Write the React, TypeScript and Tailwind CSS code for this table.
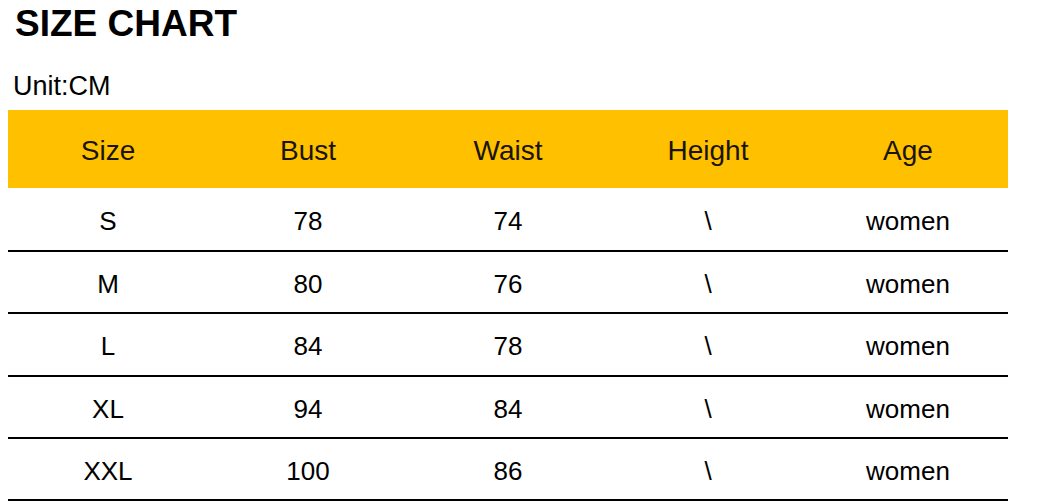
import React from 'react';

const rows = [
    { size: 'S', bust: '78', waist: '74', height: '\\', age: 'women' },
    { size: 'M', bust: '80', waist: '76', height: '\\', age: 'women' },
    { size: 'L', bust: '84', waist: '78', height: '\\', age: 'women' },
    { size: 'XL', bust: '94', waist: '84', height: '\\', age: 'women' },
    { size: 'XXL', bust: '100', waist: '86', height: '\\', age: 'women' },
];

const headers = ['Size', 'Bust', 'Waist', 'Height', 'Age'];

export default function App() {
    return (
        <div className="w-[1045px] h-[501px] bg-white overflow-hidden font-['Liberation_Sans',Arial,sans-serif] text-black">
            {/* title */}
            <h1 className="pl-[15px] pt-[5px] text-[37px] font-bold leading-none">SIZE CHART</h1>
            <div className="pl-[13px] mt-[31px] text-[27px] leading-none">Unit:CM</div>

            {/* table */}
            <div className="mt-[10px] ml-[8px] w-[1000px]">
                <div className="grid grid-cols-5 h-[78px] pt-[4px] bg-[#FFC000] text-[28px] text-[#1a1405]">
                    {headers.map((h) => (
                        <div key={h} className="flex items-center justify-center">{h}</div>
                    ))}
                </div>

                {rows.map((r, i) => (
                    <div
                        key={r.size}
                        className={`grid grid-cols-5 border-b-2 border-black text-[26px] pt-[5px] ${i === 0 ? 'h-[64px]' : 'h-[62.33px]'}`}
                    >
                        <div className="flex items-center justify-center">{r.size}</div>
                        <div className="flex items-center justify-center">{r.bust}</div>
                        <div className="flex items-center justify-center">{r.waist}</div>
                        <div className="flex items-center justify-center">{r.height}</div>
                        <div className="flex items-center justify-center">{r.age}</div>
                    </div>
                ))}
            </div>
        </div>
    );
}
